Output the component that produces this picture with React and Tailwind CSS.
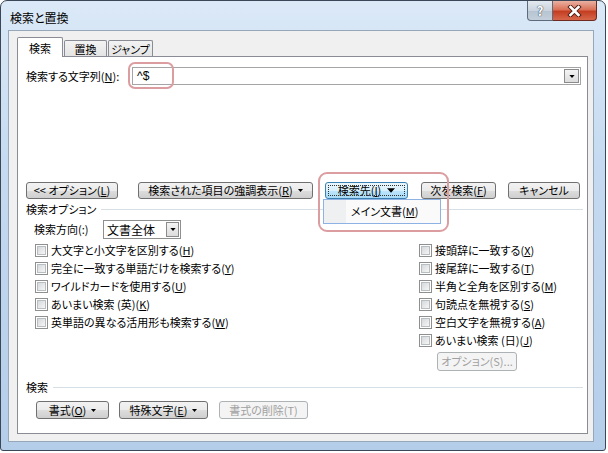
import React from 'react';

const btn =
  'flex items-center justify-center border border-[#707070] rounded-[3px] bg-[linear-gradient(#f2f2f2_0%,#ebebeb_50%,#dddddd_51%,#cfcfcf_100%)] text-[11px] leading-none text-black whitespace-nowrap';
const btnOff =
  'flex items-center justify-center border border-[#adb2b5] rounded-[3px] bg-[#f4f4f4] text-[11px] leading-none text-[#a0a0a0] whitespace-nowrap';

const Tri = ({ w = 7, h = 4 }) => (
  <svg width={w} height={h} viewBox="0 0 7 4" className="shrink-0">
    <path d="M0 0h7L3.5 4z" fill="#000" />
  </svg>
);

const Check = ({ children }) => (
  <div className="h-[18px] flex items-center gap-[3px] text-[11px] whitespace-nowrap">
    <span className="w-[13px] h-[13px] border border-[#8e8f8f] bg-white flex items-center justify-center shrink-0">
      <span className="w-[9px] h-[9px] border border-[#b8bdc2] bg-[linear-gradient(135deg,#d6d8db,#f6f6f6)]" />
    </span>
    <span>{children}</span>
  </div>
);

const DropBtn = ({ className = '' }) => (
  <span
    className={`flex items-center justify-center border border-[#8b8b8b] bg-[linear-gradient(#f4f4f4,#dcdcdc)] ${className}`}
  >
    <Tri w={6} h={3} />
  </span>
);

const SectionHead = ({ label }) => (
  <div className="flex items-center h-[14px] text-[11px] mr-[-2px]">
    <span>{label}</span>
    <span className="flex-1 h-px bg-[#d5dfe5] ml-[5px]" />
  </div>
);

export default function App() {
  return (
    <div className="w-[608px] h-[453px] bg-white font-['Noto_Sans_CJK_JP',sans-serif] [font-feature-settings:'palt'] text-black">
      <div className="w-[606px] h-[451px] border border-[#3b4656] rounded-t-[7px] rounded-b-[3px] bg-[linear-gradient(180deg,#dbe9f7_0%,#c6dbf1_35%,#b4cde9_100%)] flex flex-col px-[7px] pb-[8px]">
        {/* title bar */}
        <div className="h-[29px] flex justify-between items-start shrink-0">
          <div className="pt-[9px] pl-[2px] text-[12px] leading-[16px]">検索と置換</div>
          <div className="flex mr-[1px]">
            <div className="w-[26px] h-[20px] border border-[#5d6b7c] border-t-0 rounded-bl-[4px] bg-[linear-gradient(#e3e9ef_0%,#cad4de_50%,#b6c3d0_51%,#c4d0dc_100%)] flex items-center justify-center">
              <span className="text-[13px] font-bold leading-none text-white [text-shadow:0_0_1px_#2c3a4a,0_0_1px_#2c3a4a]">?</span>
            </div>
            <div className="w-[44px] h-[20px] border border-[#6e2a20] border-t-0 border-l-0 rounded-br-[4px] bg-[linear-gradient(#eab1a2_0%,#da7259_45%,#c43e22_55%,#d7684b_100%)] flex items-center justify-center">
              <svg width="15" height="12" viewBox="0 0 15 12">
                <path d="M3.5 2l8 8M11.5 2l-8 8" stroke="#4a1a12" strokeWidth="4.4" strokeLinecap="square" />
                <path d="M3.5 2l8 8M11.5 2l-8 8" stroke="#fff" strokeWidth="2.6" strokeLinecap="square" />
              </svg>
            </div>
          </div>
        </div>

        {/* body */}
        <div className="flex-1 mr-[4px] border border-[#96a7ba] bg-[#f0f0f0] pt-[6px] pl-[8px] pr-[5px] pb-[7px] flex flex-col">
          {/* tabs */}
          <div className="flex items-end h-[20px] shrink-0 text-[11px]">
            <div className="relative z-10 w-[46px] h-[20px] border border-b-0 border-[#898c95] rounded-t-[2px] bg-white flex items-center justify-center pt-[1px]">
              検索
            </div>
            <div className="ml-[1px] w-[43px] h-[17px] border border-b-0 border-[#898c95] rounded-t-[2px] bg-[linear-gradient(#f3f3f3,#e3e3e3)] flex items-center justify-center">
              置換
            </div>
            <div className="ml-[1px] w-[45px] h-[17px] border border-b-0 border-[#898c95] rounded-t-[2px] bg-[linear-gradient(#f3f3f3,#e3e3e3)] flex items-center justify-center">
              ジャンプ
            </div>
          </div>

          {/* panel */}
          <div className="flex-1 -mt-px bg-white border border-[#898c95] flex flex-col pl-[8px] pr-[6px]">
            {/* search text */}
            <div className="mt-[10px] h-[18px] flex items-center text-[11px]">
              <span className="w-[106px] whitespace-nowrap">
                検索する文字列(<u>N</u>):
              </span>
              <div className="relative flex-1 h-[18px] border border-[#a5a5a5] bg-white flex items-center">
                <span className="flex-1 pl-[4px] text-[12px] leading-none font-['Liberation_Sans',sans-serif]">^$</span>
                <DropBtn className="w-[15px] h-[14px] mr-[1px]" />
                <span className="absolute left-[-5px] top-[-6px] w-[46px] h-[27px] border-2 border-[#dc9da0] rounded-[7px]" />
              </div>
            </div>

            {/* main buttons */}
            <div className="mt-[97px] flex h-[17px]">
              <div className={`${btn} w-[92px]`}>
                &lt;&lt; オプション(<u>L</u>)
              </div>
              <div className={`${btn} w-[175px] ml-[20px] gap-[5px]`}>
                <span>
                  検索された項目の強調表示(<u>R</u>)
                </span>
                <Tri w={5} h={3} />
              </div>
              <div className="relative ml-[12px]">
                <div className="w-[83px] h-[17px] flex items-center justify-center gap-[6px] border border-[#3c7fb1] rounded-[3px] bg-[linear-gradient(#eaf6fd_0%,#d9f0fc_50%,#bee6fd_51%,#a7d9f5_100%)] text-[11px] leading-none whitespace-nowrap">
                  <span className="absolute left-[3px] top-[3px] w-[77px] h-[11px] border border-dotted border-[#333]" />
                  <span>
                    検索先(<u>I</u>)
                  </span>
                  <Tri w={8} h={5} />
                </div>
                <div className="absolute z-20 left-[-2px] top-[17px] w-[118px] h-[25px] border border-[#8db2e3] bg-[#fafafa] flex">
                  <span className="w-[22px] bg-[#eef0f2]" />
                  <span className="flex-1 flex items-center pl-[5px] text-[11px] whitespace-nowrap">
                    メイン文書(<u>M</u>)
                  </span>
                </div>
                <span className="absolute z-30 left-[-7px] top-[-10px] w-[131px] h-[60px] border-2 border-[#dc9da0] rounded-[9px]" />
              </div>
              <div className={`${btn} w-[75px] ml-[13px]`}>
                次を検索(<u>F</u>)
              </div>
              <div className={`${btn} w-[72px] ml-[12px]`}>キャンセル</div>
            </div>

            {/* search options */}
            <div className="mt-[3px]">
              <SectionHead label="検索オプション" />
            </div>
            <div className="mt-[4px] h-[19px] flex items-center pl-[8px] text-[11px]">
              <span className="w-[69px] whitespace-nowrap">検索方向(:)</span>
              <div className="w-[78px] h-[19px] border border-[#8e8f8f] bg-white flex items-center">
                <span className="flex-1 pl-[3px] text-[12px] leading-none">文書全体</span>
                <DropBtn className="w-[13px] h-[15px] mr-[1px]" />
              </div>
            </div>

            <div className="mt-[2px] pl-[9px] grid grid-cols-[384px_1fr]">
              <div className="flex flex-col">
                <Check>
                  大文字と小文字を区別する(<u>H</u>)
                </Check>
                <Check>
                  完全に一致する単語だけを検索する(<u>Y</u>)
                </Check>
                <Check>
                  ワイルドカードを使用する(<u>U</u>)
                </Check>
                <Check>
                  あいまい検索 (英)(<u>K</u>)
                </Check>
                <Check>
                  英単語の異なる活用形も検索する(<u>W</u>)
                </Check>
              </div>
              <div className="flex flex-col">
                <Check>
                  接頭辞に一致する(<u>X</u>)
                </Check>
                <Check>
                  接尾辞に一致する(<u>T</u>)
                </Check>
                <Check>
                  半角と全角を区別する(<u>M</u>)
                </Check>
                <Check>
                  句読点を無視する(<u>S</u>)
                </Check>
                <Check>
                  空白文字を無視する(<u>A</u>)
                </Check>
                <Check>
                  あいまい検索 (日)(<u>J</u>)
                </Check>
                <div className={`${btnOff} mt-[3px] ml-[18px] w-[80px] h-[19px]`}>オプション(S)...</div>
              </div>
            </div>

            {/* search section */}
            <div className="mt-[9px]">
              <SectionHead label="検索" />
            </div>
            <div className="mt-[7px] ml-[10px] flex h-[18px]">
              <div className={`${btn} w-[73px] gap-[5px]`}>
                <span>
                  書式(<u>O</u>)
                </span>
                <Tri w={5} h={3} />
              </div>
              <div className={`${btn} w-[89px] ml-[10px] gap-[5px]`}>
                <span>
                  特殊文字(<u>E</u>)
                </span>
                <Tri w={5} h={3} />
              </div>
              <div className={`${btnOff} w-[89px] ml-[11px]`}>書式の削除(T)</div>
            </div>
          </div>
        </div>
      </div>
    </div>
  );
}
